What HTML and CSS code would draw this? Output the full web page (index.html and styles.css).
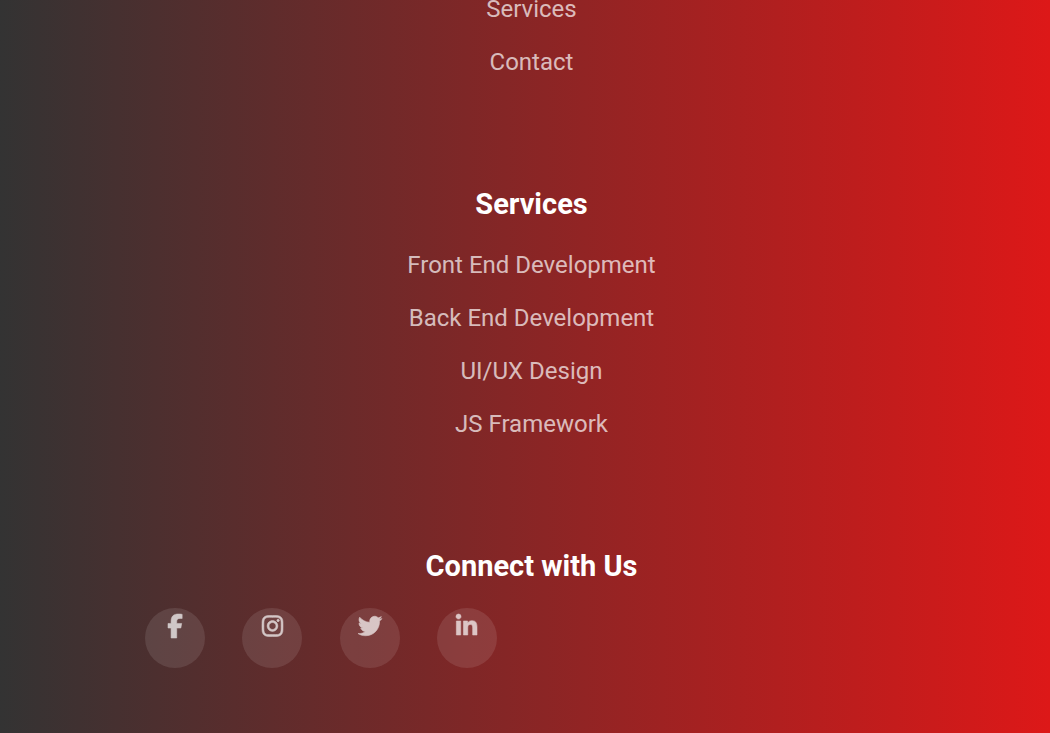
FILE: index.html
```html
<!DOCTYPE html>
<html lang="en">
<head>
<meta charset="utf-8">
<title>Footer</title>
<link rel="stylesheet" href="styles.css">
</head>
<body>
<footer class="footer">
  <nav class="group">
    <ul class="links">
      <li><a href="#">Services</a></li>
      <li><a href="#">Contact</a></li>
    </ul>
  </nav>
  <section class="group">
    <h2 class="title">Services</h2>
    <ul class="links">
      <li><a href="#">Front End Development</a></li>
      <li><a href="#">Back End Development</a></li>
      <li><a href="#">UI/UX Design</a></li>
      <li><a href="#">JS Framework</a></li>
    </ul>
  </section>
  <section class="group">
    <h2 class="title">Connect with Us</h2>
    <div class="social">
      <a href="#" aria-label="Facebook"><svg viewBox="0 0 320 512"><path d="M66 299.300V512H186V299.300h88l18-97.800H186V166.900c0-51.700 20.300-71.500 72.700-71.500c16.300 0 35.400 .4 43 1.200V7.900C291.400 4 256.400 0 226.200 0C115.300 0 66 50.500 66 159.400v42.100H0v97.800H66z"/></svg></a>
      <a href="#" aria-label="Instagram"><svg viewBox="0 0 448 512"><path d="M224.100 141c-63.600 0-114.900 51.300-114.900 114.900s51.300 114.900 114.900 114.900S339 319.500 339 255.900 287.700 141 224.100 141zm0 189.600c-41.100 0-74.700-33.500-74.700-74.700s33.500-74.700 74.700-74.700 74.700 33.500 74.700 74.700-33.600 74.700-74.700 74.700zm146.400-194.300c0 14.900-12 26.800-26.800 26.800-14.900 0-26.800-12-26.800-26.800s12-26.800 26.800-26.800 26.800 12 26.800 26.800zm76.100 27.200c-1.700-35.900-9.900-67.700-36.200-93.900-26.200-26.200-58-34.400-93.900-36.200-37-2.100-147.900-2.100-184.900 0-35.800 1.700-67.600 9.900-93.900 36.100s-34.400 58-36.200 93.900c-2.100 37-2.100 147.900 0 184.900 1.700 35.900 9.900 67.700 36.200 93.900s58 34.400 93.900 36.200c37 2.100 147.900 2.100 184.900 0 35.900-1.700 67.700-9.900 93.900-36.200 26.200-26.200 34.400-58 36.200-93.900 2.100-37 2.100-147.800 0-184.800zM398.800 388c-7.800 19.600-22.900 34.700-42.600 42.600-29.500 11.700-99.500 9-132.100 9s-102.700 2.600-132.100-9c-19.600-7.800-34.700-22.900-42.600-42.600-11.700-29.500-9-99.500-9-132.100s-2.600-102.700 9-132.100c7.800-19.600 22.900-34.700 42.600-42.600 29.500-11.700 99.500-9 132.100-9s102.700-2.600 132.100 9c19.600 7.800 34.700 22.900 42.600 42.600 11.700 29.500 9 99.500 9 132.100s2.700 102.700-9 132.100z"/></svg></a>
      <a href="#" aria-label="Twitter"><svg viewBox="0 0 512 512"><path d="M459.370 151.716c.325 4.548.325 9.097.325 13.645 0 138.720-105.583 298.558-298.558 298.558-59.452 0-114.680-17.219-161.137-47.106 8.447.974 16.568 1.299 25.340 1.299 49.055 0 94.213-16.568 130.274-44.832-46.132-.975-84.792-31.188-98.112-72.772 6.498.974 12.995 1.624 19.818 1.624 9.421 0 18.843-1.300 27.614-3.573-48.081-9.747-84.143-51.980-84.143-102.985v-1.299c13.969 7.797 30.214 12.670 47.431 13.319-28.264-18.843-46.781-51.005-46.781-87.391 0-19.492 5.197-37.360 14.294-52.954 51.655 63.675 129.300 105.258 216.365 109.807-1.624-7.797-2.599-15.918-2.599-24.040 0-57.828 46.782-104.934 104.934-104.934 30.213 0 57.502 12.670 76.670 33.137 23.715-4.548 46.456-13.320 66.599-25.340-7.798 24.366-24.366 44.833-46.132 57.827 21.117-2.273 41.584-8.122 60.426-16.243-14.292 20.791-32.161 39.308-52.628 54.253z"/></svg></a>
      <a href="#" aria-label="LinkedIn"><svg viewBox="0 0 448 512"><path d="M100.280 448H7.400V148.900h92.880zM53.790 108.100C24.090 108.100 0 83.500 0 53.800a53.790 53.790 0 0 1 107.580 0c0 29.700-24.100 54.300-53.790 54.300zM447.900 448h-92.680V302.400c0-34.700-.7-79.200-48.290-79.200-48.290 0-55.690 37.700-55.690 76.700V448h-92.780V148.900h89.080v40.800h1.300c12.400-23.500 42.690-48.300 87.880-48.300 94 0 111.280 61.900 111.280 142.300V448z"/></svg></a>
    </div>
  </section>
</footer>
</body>
</html>
```
FILE: styles.css
```css
body {
  margin: 0;
  background: #333;
  font-family: Roboto, sans-serif;
}

.footer {
  margin-top: -5px;
  padding: 0 125px 65px 138px;
  background: linear-gradient(90deg, #333, #dd1818);
  color: #fff;
}

.group {
  padding-bottom: 110px;
}

.group:last-child {
  padding-bottom: 0;
}

.title {
  margin: 0 0 30px;
  font-size: 29px;
  line-height: 34px;
  font-weight: 700;
  text-align: center;
}

.links {
  display: grid;
  gap: 24px;
  margin: 0;
  padding: 0;
  list-style: none;
  text-align: center;
  font-size: 24px;
  line-height: 29px;
}

.links a {
  color: rgba(255, 255, 255, 0.7);
  text-decoration: none;
}

.social {
  display: flex;
  justify-content: space-between;
  max-width: 352px;
  margin-top: -5px;
  padding-left: 7px;
}

.social a {
  display: flex;
  align-items: flex-start;
  justify-content: center;
  box-sizing: border-box;
  width: 60px;
  height: 60px;
  padding-top: 6px;
  border-radius: 50%;
  background: rgba(255, 255, 255, 0.1);
}

.social svg {
  height: 24px;
  overflow: visible;
  fill: #fff;
  stroke: #fff;
  stroke-width: 12;
  opacity: 0.7;
}
```
